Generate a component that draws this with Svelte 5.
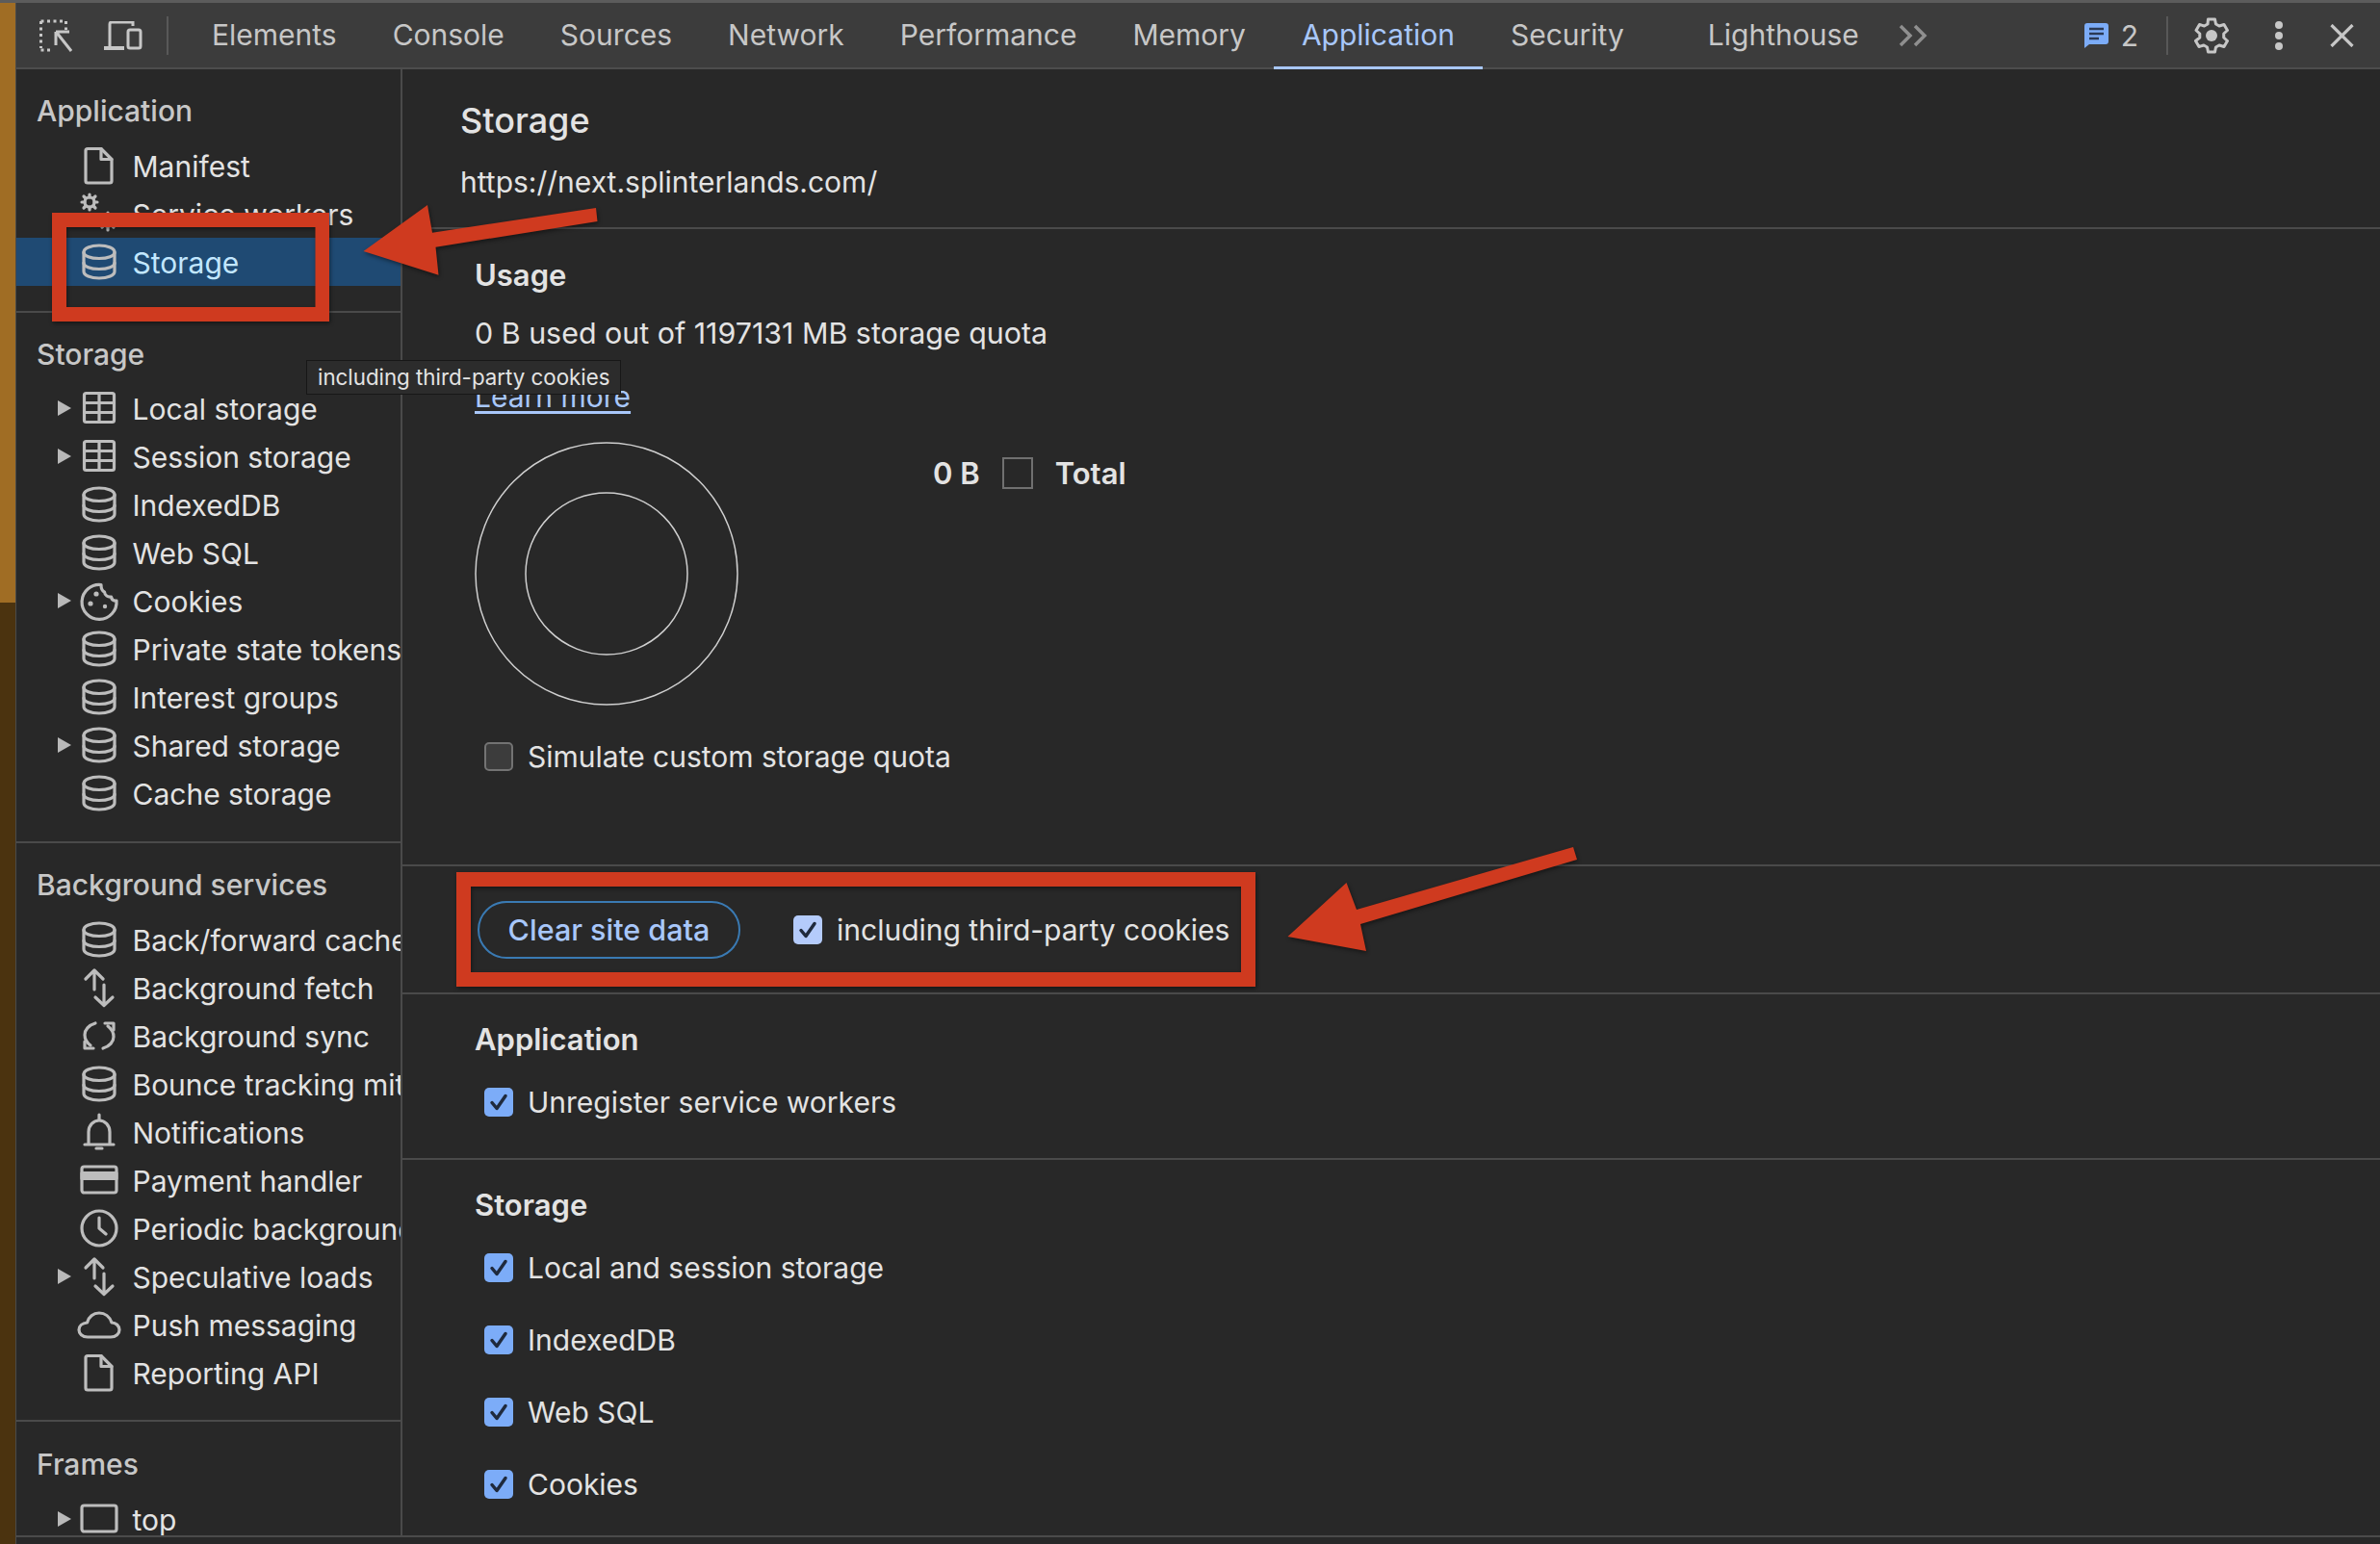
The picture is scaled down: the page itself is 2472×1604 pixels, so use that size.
<script>
  const tabs = ['Elements', 'Console', 'Sources', 'Network', 'Performance', 'Memory', 'Application', 'Security', 'Lighthouse']

  const groups = [
    {
      title: 'Application',
      rows: [
        { label: 'Manifest', icon: 'file' },
        { label: 'Service workers', icon: 'gears' },
        { label: 'Storage', icon: 'db', selected: true },
      ],
    },
    {
      title: 'Storage',
      rows: [
        { label: 'Local storage', icon: 'table', arrow: true },
        { label: 'Session storage', icon: 'table', arrow: true },
        { label: 'IndexedDB', icon: 'db' },
        { label: 'Web SQL', icon: 'db' },
        { label: 'Cookies', icon: 'cookie', arrow: true },
        { label: 'Private state tokens', icon: 'db' },
        { label: 'Interest groups', icon: 'db' },
        { label: 'Shared storage', icon: 'db', arrow: true },
        { label: 'Cache storage', icon: 'db' },
      ],
    },
    {
      title: 'Background services',
      rows: [
        { label: 'Back/forward cache', icon: 'db' },
        { label: 'Background fetch', icon: 'updown' },
        { label: 'Background sync', icon: 'sync' },
        { label: 'Bounce tracking mitigations', icon: 'db' },
        { label: 'Notifications', icon: 'bell' },
        { label: 'Payment handler', icon: 'card' },
        { label: 'Periodic background sync', icon: 'clock' },
        { label: 'Speculative loads', icon: 'updown', arrow: true },
        { label: 'Push messaging', icon: 'cloud' },
        { label: 'Reporting API', icon: 'file' },
      ],
    },
    {
      title: 'Frames',
      rows: [{ label: 'top', icon: 'frame', arrow: true }],
    },
  ]

  const storageChecks = ['Local and session storage', 'IndexedDB', 'Web SQL', 'Cookies']
</script>

{#snippet icon(name)}
  <svg class="row-icon" viewBox="0 0 40 40" fill="none" stroke="currentColor" stroke-width="3.200" stroke-linejoin="round" stroke-linecap="round">
    {#if name === 'db'}
      <path d="M4 10c0-4 7-7 16-7s16 3 16 7v20c0 4-7 7-16 7S4 34 4 30V10z" />
      <path d="M4 10c0 4 7 6.500 16 6.500S36 14 36 10" />
      <path d="M4 21c0 4 7 6.500 16 6.500S36 25 36 21" />
    {:else if name === 'table'}
      <rect x="4.500" y="4.500" width="31" height="30" rx="2" />
      <path d="M4.500 14.500h31M4.500 24.500h31M20 4.500v30" />
    {:else if name === 'file'}
      <path d="M6 4.500a2 2 0 0 1 2-2h14l11 11V36a2 2 0 0 1-2 2H8a2 2 0 0 1-2-2V4.500z" />
      <path d="M22 2.500V13.500h11" />
    {:else if name === 'gears'}
      <circle cx="10" cy="8" r="5" />
      <path d="M10 0v3M10 13v3M2 8h3M15 8h3M4 2l2 2M16 2l-2 2M4 14l2-2M16 14l-2-2" />
      <circle cx="29" cy="28" r="5" />
      <path d="M29 19v4M29 33v4M20 28h4M34 28h4M23 22l2 2M35 22l-2 2M23 34l2-2M35 34l-2-2" />
    {:else if name === 'cookie'}
      <path d="M22 3.500A18 18 0 1 0 38 20c-3 .5-5-1-5.500-4-3.500.5-6.500-1.500-7-5-2.500-1-3.500-4.500-3.500-7.500z" />
      <g fill="currentColor" stroke="none">
        <circle cx="17" cy="13" r="2.600" />
        <circle cx="11" cy="23" r="2.600" />
        <circle cx="26" cy="26" r="2.200" />
      </g>
    {:else if name === 'updown'}
      <path d="M15 22V3M6 11l9-9 9 9" />
      <path d="M25 17v21M16 30l9 8.500 9-8.500" />
    {:else if name === 'sync'}
      <path d="M16 7C9 9 5 14 5 19c0 4 2 8 6 11" />
      <path d="M5 26v7h9" />
      <path d="M24 33c7-2 11-7 11-12 0-4-2-8-6-11" />
      <path d="M35 14V7h-9" />
    {:else if name === 'bell'}
      <path d="M5 33h30M9 33V20c0-7 5-12 11-12s11 5 11 12v13" />
      <path d="M20 2v5" />
      <path d="M17 37h6" />
    {:else if name === 'card'}
      <rect x="2" y="6" width="36" height="27" rx="2.500" />
      <path d="M2 12.500h36v6H2z" fill="currentColor" />
    {:else if name === 'clock'}
      <circle cx="20" cy="20" r="18" />
      <path d="M20 9v11l7 6" />
    {:else if name === 'cloud'}
      <path d="M8 33h24c5.500 0 9-3.500 9-7.500S37.500 18 33 18C31 12 26 8 20 8c-6 0-11 4-12.500 10C2.500 18.500-1 21.500-1 25.500S2.500 33 8 33z" />
    {:else if name === 'frame'}
      <rect x="2" y="6" width="36" height="27" rx="2.500" />
    {/if}
  </svg>
{/snippet}

{#snippet checkbox(checked, light = false)}
  <span class="check" class:checked class:light>
    {#if checked}
      <svg viewBox="0 0 30 30" fill="none" stroke="#1f2a3d" stroke-width="3.500" stroke-linecap="round" stroke-linejoin="round">
        <path d="M8 15.500l5 6 9-13" />
      </svg>
    {/if}
  </span>
{/snippet}

<div class="page">
  <div class="top-strip"></div>
  <div class="body">
    <div class="page-edge"><div class="edge-top"></div></div>
    <div class="devtools">
      <header class="toolbar">
        <svg class="tool inspect" viewBox="0 0 34 36" fill="none" stroke="#c7c7c7" stroke-width="3">
          <path d="M1.500 3v28M1.500 3h26M27.500 3v9M1.500 33h12" stroke-dasharray="3 3.500" />
          <path d="M17 14h14M17 14v14M18 15l15 19" stroke-width="3" />
        </svg>
        <svg class="tool device" viewBox="0 0 40 30" fill="none" stroke="#c7c7c7" stroke-width="3">
          <path d="M6 26V3a2 2 0 0 1 2-2h22v4" />
          <path d="M0 28h21" stroke-width="4" />
          <rect x="25" y="9" width="13" height="19" rx="2" />
        </svg>
        <span class="tool-sep"></span>

        <nav class="tabs">
          {#each tabs as tab}
            <span class="tab" class:active={tab === 'Application'} class:pushed={tab === 'Lighthouse'}>{tab}</span>
          {/each}
        </nav>
        <svg class="more" viewBox="0 0 30 24" fill="none" stroke="#8f8f8f" stroke-width="3.500">
          <path d="M2 2l10 10L2 22M17 2l10 10-10 10" />
        </svg>

        <div class="toolbar-right">
          <svg class="msg" viewBox="0 0 25 26">
            <path d="M3 0h19a3 3 0 0 1 3 3v16a3 3 0 0 1-3 3H5l-5 4V3a3 3 0 0 1 3-3z" fill="#7cacf8" />
            <path d="M5 6h15M5 11h15M5 16h10" stroke="#2b3a55" stroke-width="2.500" />
          </svg>
          <span class="msg-count">2</span>
          <span class="tool-sep right"></span>
          <svg class="gear" viewBox="0 0 36 38" fill="none" stroke="#c7c7c7" stroke-width="3" stroke-linejoin="round">
            <path d="M14.500 2h7l1 5 3.500 2 5-1.500 3.500 6-3.800 3.500v4l3.800 3.500-3.500 6-5-1.500-3.500 2-1 5h-7l-1-5-3.500-2-5 1.500-3.500-6L5.800 21v-4L2 13.500l3.500-6 5 1.500 3.500-2z" />
            <circle cx="18" cy="19" r="6" fill="#c7c7c7" stroke="none" />
          </svg>
          <svg class="dots" viewBox="0 0 8 30" fill="#c7c7c7">
            <circle cx="4" cy="4" r="4" /><circle cx="4" cy="15" r="4" /><circle cx="4" cy="26" r="4" />
          </svg>
          <svg class="close" viewBox="0 0 25 24" stroke="#c7c7c7" stroke-width="3.200">
            <path d="M1.500 1l22 22M23.500 1l-22 22" />
          </svg>
        </div>
      </header>

      <div class="panes">
        <aside class="sidebar">
          {#each groups as group}
            <section class="group">
              <h3 class="group-title">{group.title}</h3>
              {#each group.rows as row}
                <div class="row" class:selected={row.selected}>
                  <span class="arrow" class:shown={row.arrow}></span>
                  {@render icon(row.icon)}
                  <span class="row-label">{row.label}</span>
                </div>
              {/each}
            </section>
          {/each}
        </aside>

        <main class="content">
          <div class="heading-block">
            <h1>Storage</h1>
            <div class="origin">https://next.splinterlands.com/</div>
          </div>

          <section class="usage">
            <h2>Usage</h2>
            <p class="quota">0 B used out of 1197131 MB storage quota</p>
            <a class="learn" href="#learn">Learn more</a>
            <div class="chart-row">
              <svg class="pie" viewBox="0 0 274 274" fill="none" stroke="#cfcfcf" stroke-width="1.500">
                <circle cx="137" cy="137" r="136" />
                <circle cx="137" cy="137" r="84" />
              </svg>
              <div class="legend">
                <span>0 B</span>
                <span class="swatch"></span>
                <span>Total</span>
              </div>
            </div>
            <label class="check-row simulate">{@render checkbox(false)}Simulate custom storage quota</label>
          </section>

          <section class="actions">
            <button class="clear">Clear site data</button>
            <label class="check-row third">{@render checkbox(true, true)}including third-party cookies</label>
          </section>

          <section class="block app-block">
            <h2>Application</h2>
            <label class="check-row">{@render checkbox(true)}Unregister service workers</label>
          </section>

          <section class="block storage-block">
            <h2>Storage</h2>
            {#each storageChecks as item}
              <label class="check-row">{@render checkbox(true)}{item}</label>
            {/each}
          </section>
        </main>
      </div>
      <div class="bottom-strip"></div>
    </div>
  </div>

  <!-- hover tooltip from the original capture -->
  <div class="tooltip">including third-party cookies</div>

  <!-- red annotations drawn over the screenshot -->
  <svg class="marks" viewBox="0 0 2472 1604" fill="#cf3a1f">
    <path fill-rule="evenodd" d="M54 221h288v113H54zM69 236v83h258.500v-83z" />
    <path fill-rule="evenodd" d="M474 906h830v119H474zM489 921v89h800v-89z" />
    <path d="M619 216l1.500 14-168 26.700 3 29L377.500 261 444 213l5 28.700z" />
    <path d="M1634 880l4 13-225 67 6 28-81.500-15 61-56 10.500 28z" />
  </svg>
</div>

<style>
  :global(body) {
    margin: 0;
    background: #282828;
  }

  .page {
    position: relative;
    width: 2472px;
    height: 1604px;
    overflow: hidden;
    display: flex;
    flex-direction: column;
    font-family: Inter, "Liberation Sans", sans-serif;
    font-size: 30px;
    color: #e3e3e3;
    background: #282828;
  }

  .top-strip {
    height: 3px;
    background: #5c5c5c;
    flex-shrink: 0;
  }

  .body {
    flex: 1;
    display: flex;
    min-height: 0;
  }

  .page-edge {
    width: 16px;
    flex-shrink: 0;
    background: #4b330f;
  }

  .edge-top {
    height: 623px;
    background: #a06d24;
  }

  .devtools {
    flex: 1;
    min-width: 0;
    display: flex;
    flex-direction: column;
    border-left: 1px solid #4a4a4a;
  }

  /* toolbar */
  .toolbar {
    height: 67px;
    flex-shrink: 0;
    display: flex;
    align-items: center;
    background: #3c3c3c;
    border-bottom: 2px solid #4d4d4d;
    padding-left: 24px;
  }

  .tool {
    flex-shrink: 0;
  }

  .inspect {
    width: 34px;
    height: 36px;
  }

  .device {
    width: 40px;
    height: 30px;
    margin-left: 33px;
  }

  .tool-sep {
    width: 2px;
    height: 40px;
    background: #585858;
    margin-left: 25px;
    flex-shrink: 0;
  }

  .tabs {
    display: flex;
    align-self: stretch;
    margin-left: 16px;
  }

  .tab {
    display: flex;
    align-items: center;
    padding: 0 29px;
    color: #c7c7c7;
    white-space: nowrap;
    border-bottom: 3px solid transparent;
    margin-bottom: -2px;
  }

  .tab.active {
    color: #a8c7fa;
    border-bottom-color: #a8c7fa;
  }

  .tab.pushed {
    margin-left: 29px;
  }

  .more {
    width: 30px;
    height: 24px;
    margin-left: 12px;
  }

  .toolbar-right {
    margin-left: auto;
    display: flex;
    align-items: center;
    padding-right: 27px;
  }

  .msg {
    width: 25px;
    height: 26px;
  }

  .msg-count {
    margin-left: 13px;
    color: #c7c7c7;
    font-size: 30px;
    line-height: 1;
  }

  .tool-sep.right {
    margin-left: 29px;
  }

  .gear {
    width: 36px;
    height: 38px;
    margin-left: 27px;
  }

  .dots {
    width: 8px;
    height: 30px;
    margin-left: 48px;
  }

  .close {
    width: 25px;
    height: 24px;
    margin-left: 49px;
  }

  .panes {
    flex: 1;
    min-height: 0;
    display: flex;
  }

  /* sidebar */
  .sidebar {
    width: 399px;
    flex-shrink: 0;
    border-right: 2px solid #4a4a4a;
    overflow: hidden;
  }

  .group {
    padding: 18px 0 25px;
    border-bottom: 2px solid #4a4a4a;
  }

  .group:first-child {
    padding-bottom: 26px;
  }

  .group:nth-child(3) {
    padding-bottom: 24px;
  }

  .group:last-child {
    padding-top: 19px;
    border-bottom: none;
  }

  .group-title {
    margin: 0 0 6px 21px;
    height: 50px;
    line-height: 50px;
    font-size: 30px;
    font-weight: 500;
    color: #c7c7c7;
  }

  .group:first-child .group-title,
  .group:nth-child(3) .group-title,
  .group:last-child .group-title {
    margin-bottom: 7px;
  }

  .row {
    display: flex;
    align-items: center;
    height: 50px;
    padding-left: 43px;
    white-space: nowrap;
    overflow: hidden;
  }

  .row.selected {
    background: #1f4a73;
  }

  .row.selected .row-label {
    color: #c2e7ff;
  }

  .arrow {
    width: 0;
    height: 0;
    flex-shrink: 0;
    border-left: 14px solid transparent;
    border-top: 8px solid transparent;
    border-bottom: 8px solid transparent;
  }

  .arrow.shown {
    border-left-color: #b9b9b9;
  }

  .row-icon {
    width: 40px;
    height: 40px;
    margin-left: 9px;
    flex-shrink: 0;
    color: #bdbdbd;
    overflow: visible;
  }

  .row-label {
    margin: 2px 0 0 14.5px;
    color: #e3e3e3;
  }

  /* content */
  .content {
    flex: 1;
    min-width: 0;
  }

  h1,
  h2,
  p {
    margin: 0;
  }

  .heading-block {
    padding: 28px 0 22px 60px;
    border-bottom: 2px solid #4a4a4a;
  }

  h1 {
    font-size: 36px;
    font-weight: 500;
    line-height: 50px;
  }

  .origin {
    margin-top: 14px;
    line-height: 50px;
  }

  h2 {
    font-size: 31px;
    font-weight: 600;
    line-height: 50px;
  }

  .usage {
    padding: 23px 0 87px 75px;
    border-bottom: 2px solid #4a4a4a;
  }

  .quota {
    margin-top: 10px;
    font-size: 30.4px;
    line-height: 50px;
  }

  .learn {
    display: block;
    width: fit-content;
    margin-top: 16px;
    line-height: 50px;
    color: #a8c7fa;
    text-decoration: underline;
    text-underline-offset: 4px;
  }

  .chart-row {
    display: flex;
    margin-top: 22px;
    height: 272px;
  }

  .pie {
    width: 274px;
    height: 274px;
    flex-shrink: 0;
  }

  .legend {
    display: flex;
    align-items: center;
    height: 50px;
    margin: 7px 0 0 202px;
    gap: 23px;
    font-weight: 600;
    font-size: 31px;
  }

  .swatch {
    width: 28px;
    height: 29px;
    border: 2px solid #707070;
  }

  .check-row {
    display: flex;
    align-items: center;
    height: 50px;
    gap: 15px;
    white-space: nowrap;
    margin-top: 25px;
    margin-left: 10px;
  }

  .check-row.simulate {
    margin-top: 30px;
  }

  .check {
    width: 30px;
    height: 30px;
    flex-shrink: 0;
    border-radius: 5px;
    box-sizing: border-box;
    background: #3c3c3c;
    border: 2px solid #737373;
  }

  .check.checked {
    background: #7cacf8;
    border: none;
  }

  .check.checked.light {
    background: #b4cbfb;
  }

  .check svg {
    display: block;
    width: 30px;
    height: 30px;
  }

  .actions {
    display: flex;
    align-items: center;
    height: 131px;
    padding-left: 78px;
    border-bottom: 2px solid #4a4a4a;
  }

  .clear {
    width: 273px;
    height: 60px;
    border: 2px solid #3a7ab3;
    border-radius: 30px;
    background: transparent;
    color: #a8c7fa;
    font: 500 30.5px Inter, "Liberation Sans", sans-serif;
    padding: 0;
  }

  .check-row.third {
    margin: 0 0 0 55px;
    gap: 15px;
  }

  .block {
    padding-top: 22px;
  }

  .app-block {
    padding-bottom: 33px;
    border-bottom: 2px solid #4a4a4a;
  }

  .app-block .check-row {
    margin-top: 15px;
  }

  .storage-block .check-row:first-of-type {
    margin-top: 15px;
  }

  .block h2 {
    margin-left: 75px;
  }

  .block .check-row {
    margin-left: 85px;
  }

  .bottom-strip {
    height: 7px;
    flex-shrink: 0;
    background: #282828;
    border-top: 2px solid #4a4a4a;
  }

  /* overlays */
  .tooltip {
    position: absolute;
    left: 318px;
    top: 374px;
    width: 327px;
    height: 36px;
    box-sizing: border-box;
    padding-left: 11px;
    line-height: 34px;
    font-size: 22.3px;
    white-space: nowrap;
    color: #e3e3e3;
    background: #2c2c2c;
    border: 1px solid #171717;
  }

  .marks {
    position: absolute;
    inset: 0;
    width: 2472px;
    height: 1604px;
    pointer-events: none;
    filter: drop-shadow(1px 2px 2px rgba(0, 0, 0, 0.45));
  }
</style>
